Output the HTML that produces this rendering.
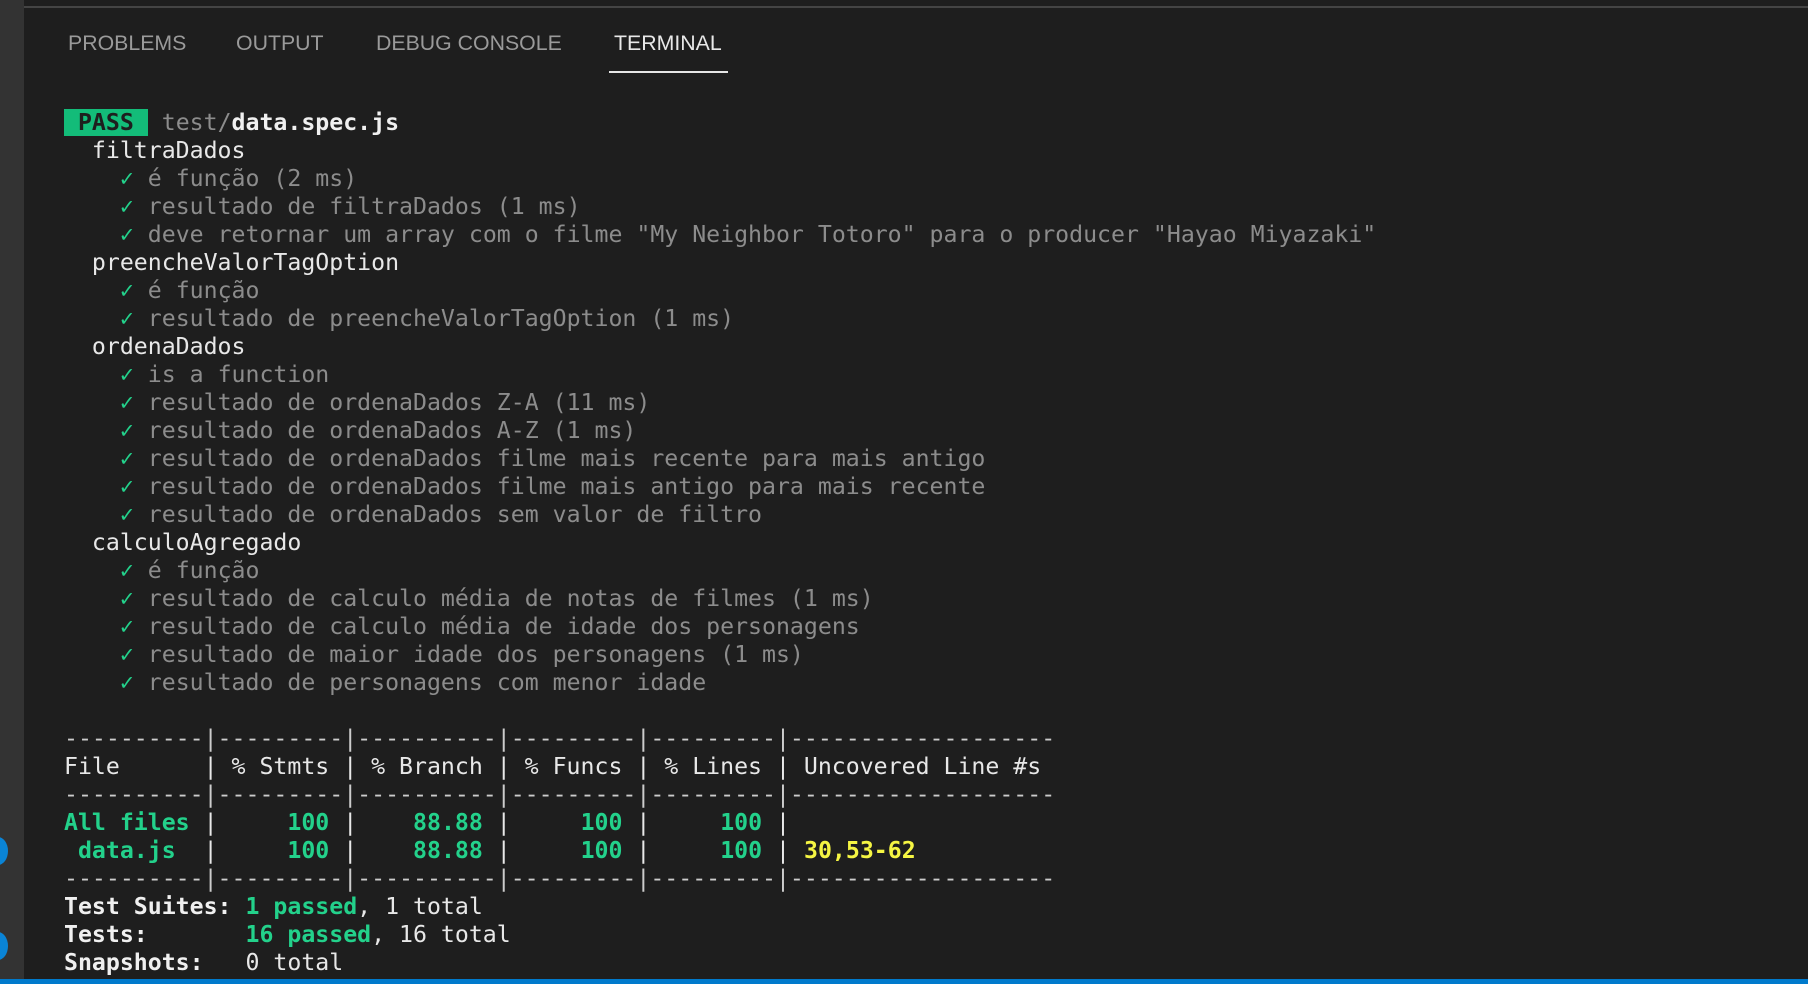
<!DOCTYPE html>
<html><head><meta charset="utf-8"><style>
html,body{margin:0;padding:0;width:1808px;height:984px;overflow:hidden;background:#1e1e1e;}
.side{position:absolute;left:0;top:0;width:24px;height:979px;background:#333333;}
.topline{position:absolute;left:24px;top:0;width:1784px;height:6px;background:#1e1e1e;border-bottom:2px solid #444;}
.tabs{position:absolute;top:31px;left:0;font-family:"Liberation Sans","DejaVu Sans",sans-serif;font-size:21.3px;color:#9a9a9a;}
.tabs span{position:absolute;white-space:nowrap;top:0;}
.ul{position:absolute;left:609px;top:71px;width:119px;height:2px;background:#e6e6e6;}
.term{position:absolute;left:64px;top:109px;font-family:"DejaVu Sans Mono","Liberation Mono",monospace;font-size:23.2px;line-height:28px;color:#d4d4d4;white-space:pre;}
.g{color:#8c8c8c}.w{color:#e8e8e8}.c{color:#23d18b}.b{font-weight:bold;color:#f0f0f0}
.gr{color:#23d18b;font-weight:bold}.y{color:#f5f543;font-weight:bold}
.pass{background:#13bc79;color:#1e1e1e;font-weight:bold}
.dl{color:#cccccc}
.bar{position:absolute;left:0;top:979px;width:1808px;height:5px;background:#007acc;}
.dot{position:absolute;left:-12px;width:20px;height:28px;border-radius:50%;background:#0a84d6;}
</style></head><body>
<div class="side"></div>
<div class="topline"></div>
<div class="tabs">
<span style="left:68px">PROBLEMS</span>
<span style="left:236px">OUTPUT</span>
<span style="left:376px">DEBUG CONSOLE</span>
<span style="left:614px;color:#e8e8e8">TERMINAL</span>
</div>
<div class="ul"></div>
<div class="term"><span class="pass"> PASS </span> <span class="g">test/</span><span class="b">data.spec.js</span>
<span class="w">  filtraDados</span>
<span class="c">    ✓</span><span class="g"> é função (2 ms)</span>
<span class="c">    ✓</span><span class="g"> resultado de filtraDados (1 ms)</span>
<span class="c">    ✓</span><span class="g"> deve retornar um array com o filme "My Neighbor Totoro" para o producer "Hayao Miyazaki"</span>
<span class="w">  preencheValorTagOption</span>
<span class="c">    ✓</span><span class="g"> é função</span>
<span class="c">    ✓</span><span class="g"> resultado de preencheValorTagOption (1 ms)</span>
<span class="w">  ordenaDados</span>
<span class="c">    ✓</span><span class="g"> is a function</span>
<span class="c">    ✓</span><span class="g"> resultado de ordenaDados Z-A (11 ms)</span>
<span class="c">    ✓</span><span class="g"> resultado de ordenaDados A-Z (1 ms)</span>
<span class="c">    ✓</span><span class="g"> resultado de ordenaDados filme mais recente para mais antigo</span>
<span class="c">    ✓</span><span class="g"> resultado de ordenaDados filme mais antigo para mais recente</span>
<span class="c">    ✓</span><span class="g"> resultado de ordenaDados sem valor de filtro</span>
<span class="w">  calculoAgregado</span>
<span class="c">    ✓</span><span class="g"> é função</span>
<span class="c">    ✓</span><span class="g"> resultado de calculo média de notas de filmes (1 ms)</span>
<span class="c">    ✓</span><span class="g"> resultado de calculo média de idade dos personagens</span>
<span class="c">    ✓</span><span class="g"> resultado de maior idade dos personagens (1 ms)</span>
<span class="c">    ✓</span><span class="g"> resultado de personagens com menor idade</span>

<span class="dl">----------|---------|----------|---------|---------|-------------------</span>
<span class="w">File      | % Stmts | % Branch | % Funcs | % Lines | Uncovered Line #s </span>
<span class="dl">----------|---------|----------|---------|---------|-------------------</span>
<span class="gr">All files</span><span class="w"> | </span><span class="gr">    100</span><span class="w"> | </span><span class="gr">   88.88</span><span class="w"> | </span><span class="gr">    100</span><span class="w"> | </span><span class="gr">    100</span><span class="w"> |</span>
<span class="gr"> data.js </span><span class="w"> | </span><span class="gr">    100</span><span class="w"> | </span><span class="gr">   88.88</span><span class="w"> | </span><span class="gr">    100</span><span class="w"> | </span><span class="gr">    100</span><span class="w"> | </span><span class="y">30,53-62</span>
<span class="dl">----------|---------|----------|---------|---------|-------------------</span>
<span class="b">Test Suites: </span><span class="gr">1 passed</span><span class="w">, 1 total</span>
<span class="b">Tests:       </span><span class="gr">16 passed</span><span class="w">, 16 total</span>
<span class="b">Snapshots:   </span><span class="w">0 total</span></div>
<div class="dot" style="top:837px"></div>
<div class="dot" style="top:932px"></div>
<div class="bar"></div>
</body></html>
